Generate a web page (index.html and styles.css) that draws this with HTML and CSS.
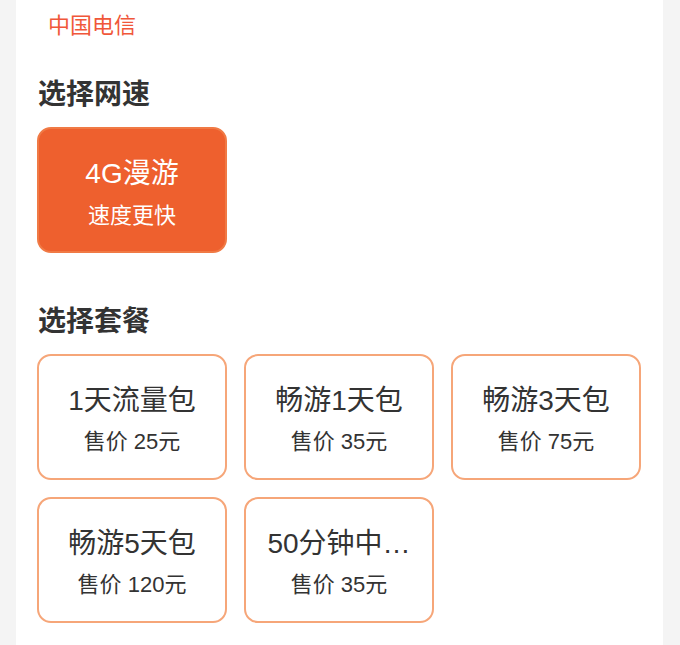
FILE: index.html
```html
<!DOCTYPE html>
<html lang="zh-CN">
<head>
<meta charset="utf-8">
<title>选择网速</title>
<link rel="stylesheet" href="styles.css">
</head>
<body>
<div class="page">
  <div class="panel">
    <div class="carrier">中国电信</div>
    <h2 class="section-title first">选择网速</h2>
    <div class="speed-grid">
      <div class="speed-card active">
        <div class="speed-name">4G漫游</div>
        <div class="speed-desc">速度更快</div>
      </div>
    </div>
    <h2 class="section-title second">选择套餐</h2>
    <div class="plan-grid">
      <div class="plan-card"><div class="plan-name">1天流量包</div><div class="plan-price">售价 25元</div></div>
      <div class="plan-card"><div class="plan-name">畅游1天包</div><div class="plan-price">售价 35元</div></div>
      <div class="plan-card"><div class="plan-name">畅游3天包</div><div class="plan-price">售价 75元</div></div>
      <div class="plan-card"><div class="plan-name">畅游5天包</div><div class="plan-price">售价 120元</div></div>
      <div class="plan-card"><div class="plan-name">50分钟中…</div><div class="plan-price">售价 35元</div></div>
    </div>
  </div>
</div>
</body>
</html>
```

FILE: styles.css
```css
html, body {
  margin: 0;
  padding: 0;
  background: #f4f4f4;
  font-family: "Liberation Sans", "Noto Sans CJK SC", sans-serif;
}

.page {
  padding: 0 17px 0 16px;
}

.panel {
  background: #ffffff;
  padding: 10px 22px 24px 21px;
  min-height: 645px;
  box-sizing: border-box;
}

.carrier {
  padding-left: 11px;
  font-size: 22px;
  line-height: 32px;
  color: #f0573a;
}

.section-title {
  margin: 0;
  font-size: 28px;
  line-height: 40px;
  font-weight: bold;
  color: #333333;
  padding-left: 1px;
}

.section-title.first {
  margin-top: 33px;
  margin-bottom: 12px;
}

.section-title.second {
  margin-top: 49px;
  margin-bottom: 12px;
}

.speed-grid,
.plan-grid {
  display: grid;
  grid-template-columns: repeat(3, 190px);
  gap: 17px;
}

.speed-card,
.plan-card {
  box-sizing: border-box;
  height: 126px;
  border-radius: 14px;
  text-align: center;
  overflow: hidden;
}

.speed-card {
  background: #ee602e;
  border: 2px solid #f07a45;
  color: #ffffff;
  padding: 26px 12px 0;
}

.speed-name {
  font-size: 28px;
  line-height: 38px;
}

.speed-desc {
  margin-top: 8px;
  font-size: 22px;
  line-height: 30px;
}

.plan-card {
  background: #ffffff;
  border: 2px solid #f6a679;
  color: #333333;
  padding: 27px 12px 0;
}

.plan-name {
  font-size: 28px;
  line-height: 36px;
  white-space: nowrap;
}

.plan-price {
  margin-top: 8px;
  font-size: 22px;
  line-height: 30px;
}
```
